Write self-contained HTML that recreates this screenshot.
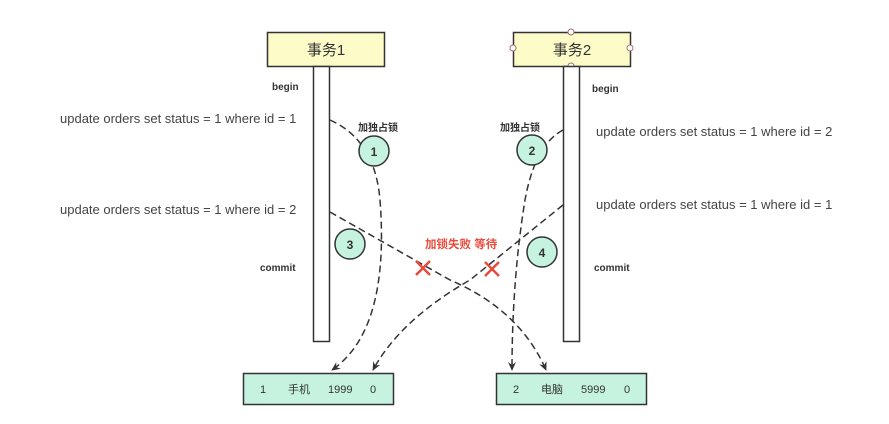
<!DOCTYPE html>
<html><head><meta charset="utf-8"><style>
body{margin:0;background:#fff;width:889px;height:419px;overflow:hidden;font-family:"Liberation Sans","Noto Sans CJK SC",sans-serif}
</style></head><body>
<svg width="889" height="419" viewBox="0 0 889 419" xmlns="http://www.w3.org/2000/svg" font-family="Liberation Sans, Noto Sans CJK SC, sans-serif">
<defs><marker id="a" markerWidth="10" markerHeight="10" refX="8" refY="5" orient="auto" markerUnits="userSpaceOnUse"><path d="M0,1 L9,5 L0,9 L3,5z" fill="#333"/></marker></defs>
<rect x="267.5" y="32.5" width="117" height="34" fill="#fdfbc8" stroke="#333" stroke-width="1.5"/>
<text x="326" y="55" font-size="15" text-anchor="middle" fill="#333">事务1</text>
<rect x="513.5" y="32.5" width="117" height="34" fill="#fdfbc8" stroke="#333" stroke-width="1.5"/>
<text x="572" y="55" font-size="15" text-anchor="middle" fill="#333">事务2</text>
<g fill="#fff" stroke="#a07070"><circle cx="571" cy="32" r="3"/><circle cx="513" cy="48" r="3"/><circle cx="630" cy="48" r="3"/><circle cx="571" cy="66" r="3"/></g>
<rect x="313.5" y="66.5" width="16" height="275" fill="#fff" stroke="#333" stroke-width="1.5"/>
<rect x="563.5" y="66.5" width="16" height="275" fill="#fff" stroke="#333" stroke-width="1.5"/>
<g font-size="10" font-weight="bold" fill="#333">
<text x="272" y="90">begin</text><text x="592" y="92">begin</text>
<text x="260" y="271">commit</text><text x="594" y="271">commit</text>
<text x="358" y="131">加独占锁</text><text x="500" y="131">加独占锁</text>
</g>
<g font-size="13" fill="#444">
<text x="60" y="123">update orders set status = 1 where id = 1</text>
<text x="60" y="214">update orders set status = 1 where id = 2</text>
<text x="596" y="136">update orders set status = 1 where id = 2</text>
<text x="596" y="209">update orders set status = 1 where id = 1</text>
</g>
<g fill="none" stroke="#333" stroke-width="1.5" stroke-dasharray="7,4">
<path d="M330,120 Q375,140 380,200 Q390,330 332,370" marker-end="url(#a)"/>
<path d="M563,130 Q535,145 525,200 Q512,280 512,370" marker-end="url(#a)"/>
<path d="M330,212 L450,280 Q520,310 546,370" marker-end="url(#a)"/>
<path d="M563,205 L470,280 Q400,320 373,370" marker-end="url(#a)"/>
</g>
<g fill="#c6f3df" stroke="#333" stroke-width="1.5">
<circle cx="374" cy="151" r="15"/><circle cx="532" cy="150" r="15"/><circle cx="350" cy="244" r="15"/><circle cx="542" cy="252" r="15"/>
</g>
<g font-size="12" font-weight="bold" fill="#333" text-anchor="middle">
<text x="374" y="156">1</text><text x="532" y="155">2</text><text x="350" y="249">3</text><text x="542" y="257">4</text>
</g>
<text x="425" y="248" font-size="11.5" font-weight="bold" fill="#e74c3c">加锁失败 等待</text>
<g stroke="#e74c3c" stroke-width="2.5"><path d="M416,261 L430,275 M430,261 L416,275"/><path d="M485,262 L499,276 M499,262 L485,276"/></g>
<rect x="243.5" y="373.5" width="150" height="31" fill="#c6f3df" stroke="#333" stroke-width="1.5"/>
<rect x="496.5" y="373.5" width="150" height="31" fill="#c6f3df" stroke="#333" stroke-width="1.5"/>
<g font-size="11" fill="#333">
<text x="260" y="393">1</text><text x="288" y="393">手机</text><text x="328" y="393">1999</text><text x="370" y="393">0</text>
<text x="513" y="393">2</text><text x="541" y="393">电脑</text><text x="581" y="393">5999</text><text x="624" y="393">0</text>
</g>
</svg>
</body></html>
